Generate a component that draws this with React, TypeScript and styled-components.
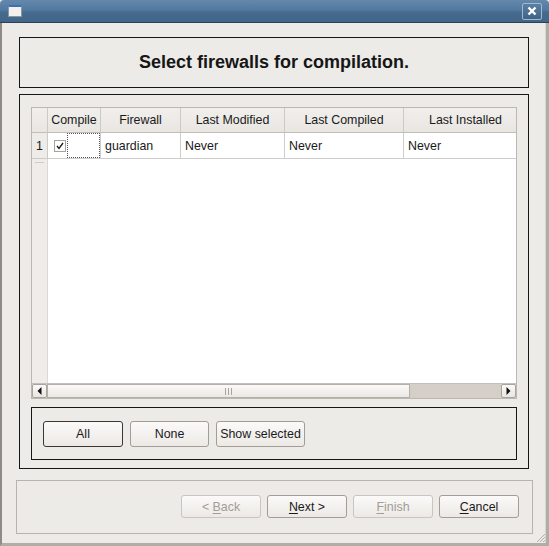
import React from 'react';
import styled, { createGlobalStyle } from 'styled-components';

const GlobalStyle = createGlobalStyle`
  html, body {
    margin: 0;
    padding: 0;
    background: #edebe7;
  }
  body {
    font-family: 'Liberation Sans', Arial, sans-serif;
    font-size: 12.4px;
    color: #1a1a1a;
  }
`;

const Window = styled.div`
  width: 549px;
  height: 546px;
  display: flex;
  flex-direction: column;
  box-sizing: border-box;
  overflow: hidden;
  position: relative;
`;

const TitleBar = styled.div`
  height: 23px;
  flex-shrink: 0;
  display: flex;
  align-items: center;
  justify-content: space-between;
  padding: 0 7px 0 8px;
  background: linear-gradient(#6388ad 0%, #5279a0 45%, #466b8f 55%, #42668a 100%);
  border-bottom: 1px solid #2c4157;
  box-sizing: border-box;
  border-radius: 4px 4px 0 0;
`;

const WinIcon = styled.div`
  width: 12px;
  height: 9px;
  background: #f2f0ec;
  border: 1px solid #8a96a3;
  border-top: 2px solid #3c6fb8;
`;

const CloseButton = styled.div`
  width: 20px;
  height: 17px;
  border: 1px solid #a3b8cc;
  border-radius: 2px;
  box-sizing: border-box;
  display: flex;
  align-items: center;
  justify-content: center;
  background: linear-gradient(#5b80a5, #3f6386);
`;

const Body = styled.div`
  flex: 1;
  display: flex;
  flex-direction: column;
  border-left: 2px solid #8e8a84;
  border-right: 3px solid #b0aca6;
  border-bottom: 3px solid #b0aca6;
  box-shadow: inset -1px 0 0 #d8d5d0;
  padding: 14px 17px 0 17px;
  position: relative;
`;

const Frame = styled.div<{ $height: number }>`
  height: ${(p) => p.$height}px;
  border: 1px solid #161616;
  box-sizing: border-box;
  flex-shrink: 0;
`;

const TitleFrame = styled(Frame)`
  display: flex;
  align-items: center;
  justify-content: center;
  font-size: 18px;
  font-weight: bold;
  color: #161616;
`;

const MainFrame = styled(Frame)`
  margin-top: 6px;
  padding: 12px 11px 0 11px;
  display: flex;
  flex-direction: column;
  gap: 8px;
`;

const Table = styled.div`
  height: 292px;
  border: 1px solid #bcb7b0;
  box-sizing: border-box;
  display: flex;
  flex-direction: column;
  background: #fff;
  overflow: hidden;
`;

const Grid = styled.div`
  flex: 1;
  display: grid;
  grid-template-columns: 16px 53px 80px 104px 119px 124px;
  grid-template-rows: 25px 26px 1fr;
  overflow: hidden;
`;

const HeadCell = styled.div`
  background: linear-gradient(#f1efec, #e9e6e2);
  border-right: 1px solid #cdc9c3;
  border-bottom: 1px solid #c2beb7;
  display: flex;
  align-items: center;
  justify-content: center;
  white-space: nowrap;
  color: #1a1a1a;
  box-sizing: border-box;
`;

const RowHead = styled.div`
  background: #eeece8;
  border-right: 1px solid #cdc9c3;
  border-bottom: 1px solid #cdc9c3;
  display: flex;
  align-items: center;
  padding-left: 4px;
  box-sizing: border-box;
`;

const RowHeadRest = styled.div`
  background: #efedea;
  border-right: 1px solid #dcd9d4;
  position: relative;
  &::before {
    content: '';
    position: absolute;
    left: 3px;
    top: 3px;
    width: 9px;
    height: 1px;
    background: #cfcbc5;
  }
`;

const Cell = styled.div`
  border-right: 1px solid #cfcccc;
  border-bottom: 1px solid #cfcccc;
  display: flex;
  align-items: center;
  padding-left: 4px;
  white-space: nowrap;
  box-sizing: border-box;
`;

const CheckCell = styled(Cell)`
  padding-left: 6px;
  position: relative;
`;

const Focus = styled.div`
  position: absolute;
  left: 19px;
  top: 0;
  right: 0;
  bottom: 0;
  border: 1px dotted #555;
`;

const CheckBox = styled.div`
  width: 12px;
  height: 12px;
  border: 1px solid #a8a29b;
  box-sizing: border-box;
  background: #fff;
  display: flex;
  align-items: center;
  justify-content: center;
`;

const Empty = styled.div`
  grid-column: 2 / span 5;
`;

const ScrollBar = styled.div`
  height: 14px;
  flex-shrink: 0;
  display: flex;
  background: #d6cfc7;
  border-top: 1px solid #c4bfb8;
`;

const ArrowButton = styled.div`
  width: 15px;
  display: flex;
  align-items: center;
  justify-content: center;
  background: linear-gradient(#fbfaf9, #e9e6e2);
  border: 1px solid #a9a49d;
  border-radius: 2px;
  box-sizing: border-box;
`;

const Slider = styled.div`
  width: 363px;
  display: flex;
  align-items: center;
  justify-content: center;
  background: linear-gradient(#fbfaf9, #ebe8e4);
  border: 1px solid #b4afa8;
  box-sizing: border-box;
`;

const Trough = styled.div`
  flex: 1;
`;

const ButtonFrame = styled(Frame)`
  display: flex;
  align-items: flex-start;
  gap: 7px;
  padding: 13px 11px;
`;

const Button = styled.div<{ $width: number; $height: number; $default?: boolean; $disabled?: boolean }>`
  width: ${(p) => p.$width}px;
  height: ${(p) => p.$height}px;
  box-sizing: border-box;
  border: 1px solid ${(p) => (p.$default ? '#3a3836' : p.$disabled ? '#c9c5bf' : '#a29d96')};
  border-radius: 3px;
  background: linear-gradient(#fbfaf9, #ece9e5);
  display: flex;
  align-items: center;
  justify-content: center;
  color: ${(p) => (p.$disabled ? '#a19d98' : '#1a1a1a')};
  white-space: pre;
  u {
    text-decoration: underline;
    text-underline-offset: 2px;
  }
`;

const Footer = styled.div`
  margin: 11px -4px 0 -3px;
  height: 54px;
  box-sizing: border-box;
  border: 1px solid #b8b3ac;
  display: flex;
  justify-content: flex-end;
  align-items: flex-start;
  gap: 6px;
  padding: 14px 13px 0 0;
`;

const Grip = styled.svg`
  position: absolute;
  right: 0;
  bottom: 0;
`;

const rows = [{ name: 'guardian', modified: 'Never', compiled: 'Never', installed: 'Never' }];

export default function App() {
  return (
    <Window>
      <GlobalStyle />
      <TitleBar>
        <WinIcon />
        <CloseButton>
          <svg width="10" height="10" viewBox="0 0 10 10">
            <path d="M1.5 1.5 L8.5 8.5 M8.5 1.5 L1.5 8.5" stroke="#fff" strokeWidth="2.4" />
          </svg>
        </CloseButton>
      </TitleBar>
      <Body>
        <TitleFrame $height={51}>Select firewalls for compilation.</TitleFrame>
        <MainFrame $height={375}>
          <Table>
            <Grid>
              <HeadCell />
              <HeadCell>Compile</HeadCell>
              <HeadCell>Firewall</HeadCell>
              <HeadCell>Last Modified</HeadCell>
              <HeadCell>Last Compiled</HeadCell>
              <HeadCell>Last Installed</HeadCell>
              {rows.map((r, i) => (
                <React.Fragment key={r.name}>
                  <RowHead>{i + 1}</RowHead>
                  <CheckCell>
                    <CheckBox>
                      <svg width="8" height="8" viewBox="0 0 8 8">
                        <path d="M1 4 L3 6.5 L7 1" stroke="#1a1a1a" strokeWidth="1.3" fill="none" />
                      </svg>
                    </CheckBox>
                    <Focus />
                  </CheckCell>
                  <Cell>{r.name}</Cell>
                  <Cell>{r.modified}</Cell>
                  <Cell>{r.compiled}</Cell>
                  <Cell>{r.installed}</Cell>
                </React.Fragment>
              ))}
              <RowHeadRest />
              <Empty />
            </Grid>
            <ScrollBar>
              <ArrowButton>
                <svg width="5" height="8" viewBox="0 0 5 8">
                  <path d="M4.5 0 L0.5 4 L4.5 8 Z" fill="#111" />
                </svg>
              </ArrowButton>
              <Slider>
                <svg width="7" height="7" viewBox="0 0 7 7">
                  <path d="M0.5 0 V7 M3.5 0 V7 M6.5 0 V7" stroke="#a8a39c" strokeWidth="1" />
                </svg>
              </Slider>
              <Trough />
              <ArrowButton>
                <svg width="5" height="8" viewBox="0 0 5 8">
                  <path d="M0.5 0 L4.5 4 L0.5 8 Z" fill="#111" />
                </svg>
              </ArrowButton>
            </ScrollBar>
          </Table>
          <ButtonFrame $height={53}>
            <Button $width={80} $height={26} $default>All</Button>
            <Button $width={79} $height={26}>None</Button>
            <Button $width={89} $height={26}>Show selected</Button>
          </ButtonFrame>
        </MainFrame>
        <Footer>
          <Button $width={80} $height={23} $disabled>{'< '}<u>B</u>ack</Button>
          <Button $width={80} $height={23}><u>N</u>{'ext >'}</Button>
          <Button $width={80} $height={23} $disabled><u>F</u>inish</Button>
          <Button $width={80} $height={23}><u>C</u>ancel</Button>
        </Footer>
        <Grip width="12" height="12" viewBox="0 0 12 12">
          <path d="M11 3 L3 11 M11 6 L6 11 M11 9 L9 11" stroke="#b5b0a9" strokeWidth="1" />
        </Grip>
      </Body>
    </Window>
  );
}
